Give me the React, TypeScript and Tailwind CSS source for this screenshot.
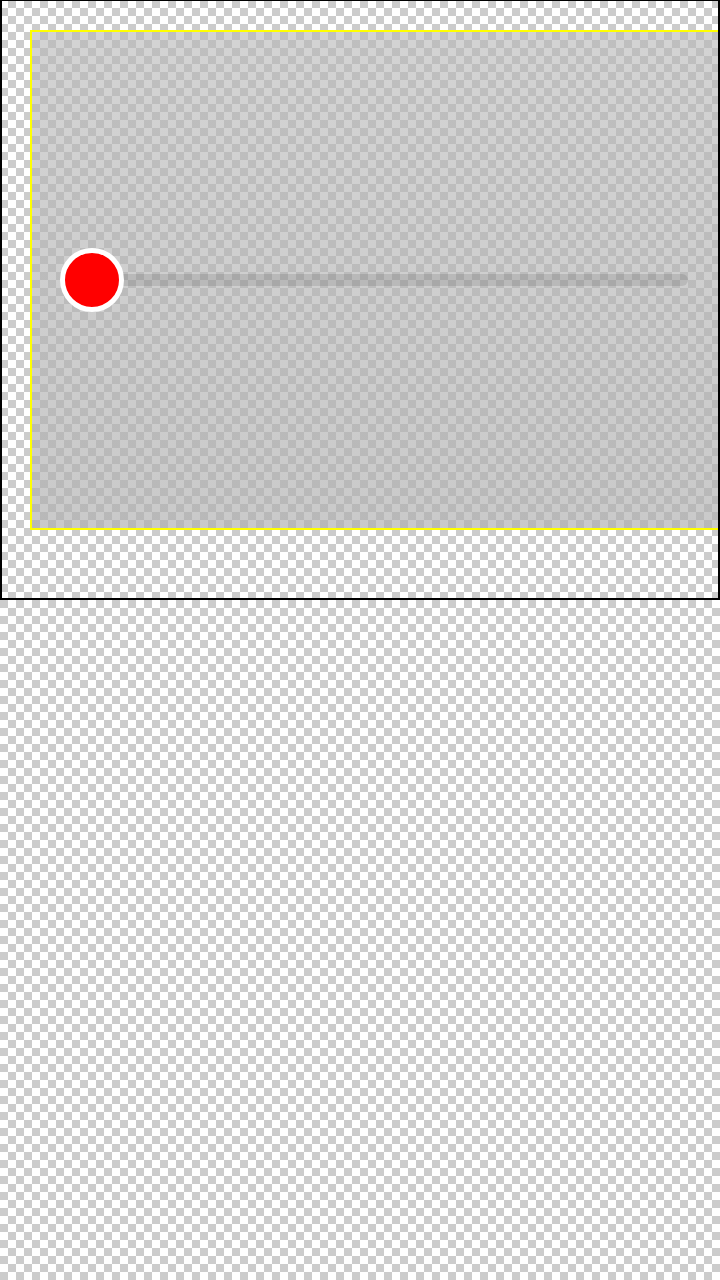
import { FunctionComponent } from "react";

const App: FunctionComponent = () => {
  return (
    <div className="w-full min-h-screen bg-[conic-gradient(#cccccc_25%,#ffffff_0_50%,#cccccc_0_75%,#ffffff_0)] bg-[length:16px_16px]">
      <div className="w-[720px] h-[600px] border-2 border-t border-black overflow-hidden box-border">
        <div className="mt-[29px] ml-[28px] w-[720px] h-[500px] border-2 border-[#ffff00] bg-linear-to-b from-[rgba(182,182,182,0.6)] to-[rgba(174,174,174,0.66)] flex flex-row items-center pl-[28px] box-border">
          <div className="relative w-[628px] h-[64px] flex flex-row items-center">
            <div className="absolute left-[20px] right-0 h-[12px] rounded-full bg-[rgba(0,0,0,0.1)]" />
            <div className="relative w-[64px] h-[64px] rounded-full border-[5px] border-white bg-[#ff0000] box-border" />
          </div>
        </div>
      </div>
    </div>
  );
};

export default App;
